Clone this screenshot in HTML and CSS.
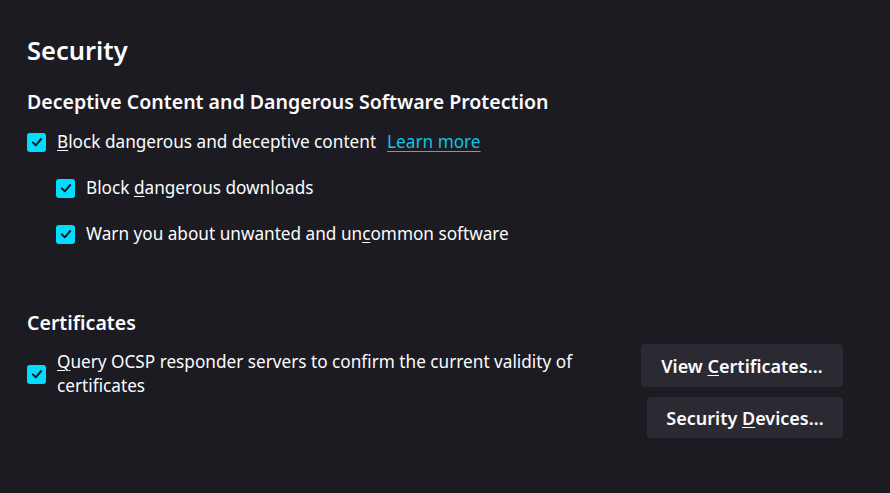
FILE: index.html
```html
<!DOCTYPE html>
<html lang="en">
<head>
<meta charset="utf-8">
<title>Security</title>
<link rel="stylesheet" href="styles.css">
</head>
<body>
<main class="page">
  <h1 class="title">Security</h1>

  <section class="group">
    <h2 class="group-title">Deceptive Content and Dangerous Software Protection</h2>
    <div class="check-row first">
      <span class="box"><svg viewBox="0 0 16 16"><path d="M3.8 8.4 L6.8 11.3 L12.2 5" /></svg></span>
      <span class="label"><u>B</u>lock dangerous and deceptive content</span>
      <a class="link" href="#">Learn more</a>
    </div>
    <div class="nested">
      <div class="check-row">
        <span class="box"><svg viewBox="0 0 16 16"><path d="M3.8 8.4 L6.8 11.3 L12.2 5" /></svg></span>
        <span class="label">Block <u>d</u>angerous downloads</span>
      </div>
      <div class="check-row">
        <span class="box"><svg viewBox="0 0 16 16"><path d="M3.8 8.4 L6.8 11.3 L12.2 5" /></svg></span>
        <span class="label">Warn you about unwanted and un<u>c</u>ommon software</span>
      </div>
    </div>
  </section>

  <section class="group certs">
    <h2 class="group-title">Certificates</h2>
    <div class="cert-row">
      <div class="check-row wrap">
        <span class="box"><svg viewBox="0 0 16 16"><path d="M3.8 8.4 L6.8 11.3 L12.2 5" /></svg></span>
        <span class="label"><u>Q</u>uery OCSP responder servers to confirm the current validity of certificates</span>
      </div>
      <div class="buttons">
        <button class="btn btn-view">View <u>C</u>ertificates…</button>
        <button class="btn btn-dev">Security <u>D</u>evices…</button>
      </div>
    </div>
  </section>
</main>
</body>
</html>
```

FILE: styles.css
```css
* { box-sizing: border-box; }

html, body {
  margin: 0;
  height: 100%;
  background: #1c1b22;
}

body {
  font-family: "Noto Sans", "Open Sans", sans-serif;
  color: #fbfbfe;
  font-size: 17.2px;
}

.page {
  padding: 33px 47px 0 27px;
}

.title {
  margin: 0;
  font-size: 25.5px;
  font-weight: 600;
  line-height: 34px;
}

.group-title {
  margin: 0;
  font-size: 19.55px;
  font-weight: 600;
  line-height: 26px;
}

.group {
  margin-top: 22px;
}

.check-row {
  display: flex;
  align-items: center;
  min-height: 24px;
  margin-top: 22px;
}

.check-row.first {
  margin-top: 15px;
}

.box {
  flex: none;
  width: 19px;
  height: 19px;
  border-radius: 3px;
  background: #00ddff;
  margin-right: 11px;
  display: flex;
  align-items: center;
  justify-content: center;
}

.box svg {
  width: 16px;
  height: 16px;
}

.box path {
  fill: none;
  stroke: #1c1b22;
  stroke-width: 2;
  stroke-linecap: round;
  stroke-linejoin: round;
}

.label {
  line-height: 24px;
}

.label u, .btn u {
  text-underline-offset: 2px;
  text-decoration-thickness: 1px;
}

.link {
  margin-left: 11px;
  color: #12c4e4;
  line-height: 24px;
  text-underline-offset: 3px;
}

.nested {
  padding-left: 29px;
}

.certs {
  margin-top: 64px;
}

.cert-row {
  display: flex;
  justify-content: space-between;
  align-items: flex-start;
  margin-top: 8px;
}

.cert-row .check-row {
  margin-top: 6px;
  max-width: 580px;
}

.buttons {
  display: flex;
  flex-direction: column;
  align-items: flex-end;
  gap: 10px;
}

.btn {
  font-family: inherit;
  font-size: 18px;
  font-weight: 600;
  color: #fbfbfe;
  background: #2b2a33;
  border: none;
  border-radius: 4px;
  padding: 0 12px;
}

.btn-view { width: 202px; height: 43px; }
.btn-dev { width: 196px; height: 41px; }
```
